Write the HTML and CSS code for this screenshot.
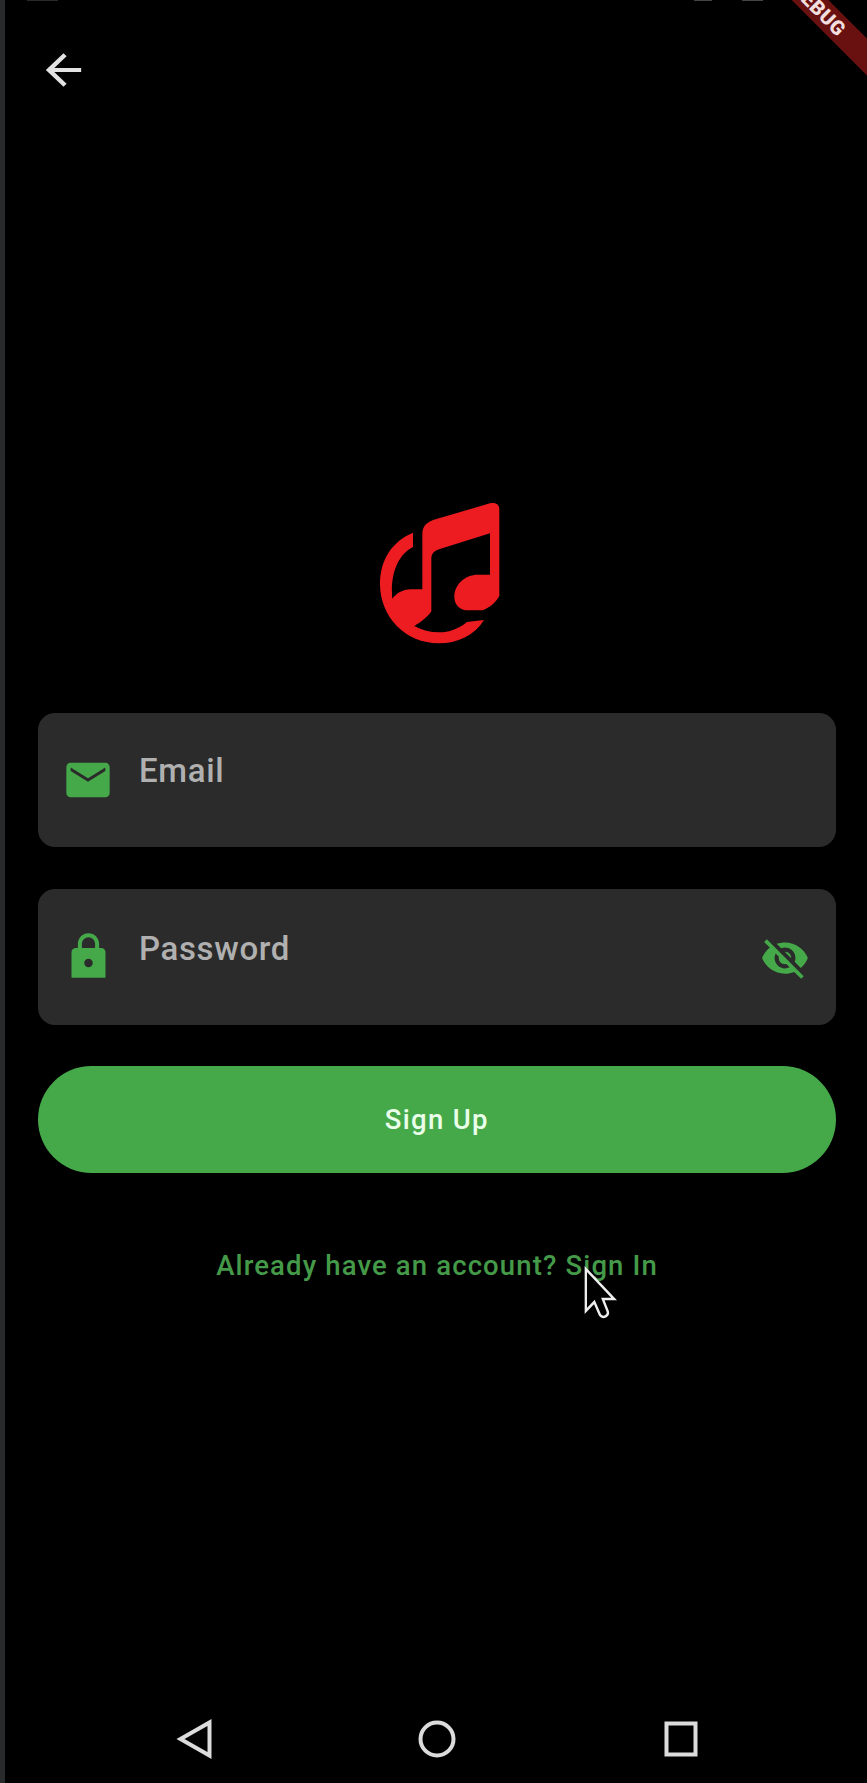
FILE: index.html
```
<!DOCTYPE html>
<html lang="en">
<head>
<meta charset="utf-8">
<title>Sign Up</title>
<link rel="stylesheet" href="styles.css">
</head>
<body>
<main class="screen">
  <div class="status-bar"><i class="sliver time"></i><i class="sliver wifi"></i><i class="sliver battery"></i></div>
  <div class="debug-banner">DEBUG</div>
  <header class="app-bar">
    <svg class="back" viewBox="0 0 24 24" preserveAspectRatio="none"><path d="M20 11H7.83l5.59-5.59L12 4l-8 8 8 8 1.41-1.41L7.83 13H20z"/></svg>
  </header>
  <svg class="logo" viewBox="0 0 480 510">
    <path d="M159 128C98 153 60 208 60 282C60 380 136 460 237 460C291 460 344 437 372 390L321 396C296 417 267 427 237 427C210 427 186 421 163 408C180 398 205 380 214 364V207C214 192 222 183 237 178L390 130V254H355C312 254 283 286 283 320C283 345 300 361 325 361H366C388 354 408 337 418 317V58C418 42 406 36 390 40L229 87C202 95 187 107 187 132V298H151C128 299 109 310 97 326C90 258 111 195 159 171Z"/>
  </svg>
  <form class="form">
    <label class="field email">
      <svg class="icon mail" viewBox="0 0 24 24"><path d="M20 4H4c-1.100 0-1.990.9-1.990 2L2 18c0 1.100.9 2 2 2h16c1.100 0 2-.9 2-2V6c0-1.100-.9-2-2-2zm0 3.800l-8 5-8-5V6.200l8 5 8-5v1.600z"/></svg>
      <span class="label label-email">Email</span>
    </label>
    <label class="field password">
      <svg class="icon lock" viewBox="0 0 24 24"><path d="M18 8h-1V6c0-2.760-2.240-5-5-5S7 3.240 7 6v2H6c-1.100 0-2 .9-2 2v12h16V10c0-1.100-.9-2-2-2zm-6 9c-1.100 0-2-.9-2-2s.9-2 2-2 2 .9 2 2-.9 2-2 2zm3.100-9H8.900V6c0-1.710 1.390-3.100 3.100-3.100s3.100 1.390 3.100 3.100v2z"/></svg>
      <span class="label label-password">Password</span>
      <svg class="icon eye" viewBox="0 0 24 24"><path d="M12 7c2.760 0 5 2.240 5 5 0 .65-.13 1.260-.36 1.830l2.920 2.920c1.510-1.260 2.700-2.890 3.430-4.750-1.730-4.390-6-7.500-11-7.500-1.400 0-2.740.25-3.980.7l2.160 2.160C10.740 7.130 11.350 7 12 7zM2 4.270l2.280 2.280.46.46C3.080 8.300 1.780 10.020 1 12c1.730 4.390 6 7.500 11 7.500 1.550 0 3.030-.3 4.380-.84l.42.42L19.730 22 21 20.730 3.270 3 2 4.270zM7.530 9.800l1.550 1.550c-.05.21-.08.43-.08.65 0 1.660 1.340 3 3 3 .22 0 .44-.03.65-.08l1.550 1.550c-.67.33-1.410.53-2.200.53-2.760 0-5-2.240-5-5 0-.79.2-1.530.53-2.200zm4.310-.78l3.150 3.150.02-.16c0-1.660-1.340-3-3-3l-.17.01z"/></svg>
    </label>
    <button class="submit" type="button"><span>Sign Up</span></button>
  </form>
  <p class="switch"><span>Already have an account? Sign In</span></p>
  <svg class="cursor" viewBox="0 0 36 54" preserveAspectRatio="none"><path d="M3 3V45L12 36L18 49C21 53 28 50 26 45L21 33H33Z"/></svg>
  <nav class="nav-bar">
    <svg class="nav nav-back" viewBox="0 0 40 42"><path d="M33.500 4.500V37.500L4.500 21Z"/></svg>
    <svg class="nav nav-home" viewBox="0 0 40 42"><circle cx="20" cy="21" r="16.500"/></svg>
    <svg class="nav nav-recent" viewBox="0 0 40 42"><path d="M5.500 5.500H34.500V36.500H5.500Z"/></svg>
  </nav>
</main>
</body>
</html>
```
FILE: styles.css
```
* { box-sizing: border-box; }
body { margin: 0; background: #000; font-family: Roboto, "Liberation Sans", sans-serif; }
.screen { position: relative; width: 867px; height: 1783px; overflow: hidden; background: #000; border-left: 5px solid #292a2c; display: flex; flex-direction: column; }
.status-bar { height: 1px; display: flex; }
.sliver { height: 1px; background: #444; }
.time { width: 31px; margin-left: 22px; background: #292929; }
.wifi { width: 18px; margin-left: 636px; }
.battery { width: 21px; margin-left: 30px; }
.debug-banner { position: absolute; left: 714px; top: -4px; width: 200px; height: 26px; line-height: 26px; text-align: center; background: #691111; color: #f3dede; font-size: 20px; font-weight: 900; letter-spacing: .5px; transform: rotate(45deg); }
.app-bar { height: 489px; padding: 44px 0 0 32px; }
.back { display: block; width: 53px; height: 50px; fill: #e2e2e2; }
.logo { display: block; width: 160px; height: 170px; margin-left: 355px; fill: #ed1c20; }
.form { margin: 53px 31px 0 32.500px; display: flex; flex-direction: column; }
.field { display: flex; align-items: flex-start; background: #2b2b2b; border-radius: 17px; }
.email { height: 134px; margin-bottom: 42px; }
.password { height: 136px; margin-bottom: 41px; }
.icon { display: block; fill: #45a849; flex: none; }
.mail { width: 52px; height: 52px; margin: 41px 0 0 24.500px; }
.lock { width: 51px; height: 51px; margin: 42px .5px 0 25px; }
.eye { width: 50px; height: 50px; margin: 43.500px 26.500px 0 auto; }
.label { color: #b0b0b0; font-size: 33px; line-height: 38px; font-weight: 500; white-space: nowrap; margin-left: 25px; letter-spacing: .65px; }
.label-email { margin-top: 39px; }
.label-password { margin-top: 41px; }
.submit { height: 107px; padding: 0; border: 0; border-radius: 54px; background: #45a849; color: #eaffea; font: 500 27.500px/32px Roboto, sans-serif; letter-spacing: 1.300px; }
.switch { margin: 77px 0 0; padding-left: 2px; text-align: center; font-size: 27.500px; line-height: 32px; font-weight: 500; letter-spacing: 1.130px; color: #459a49; width: 862px; white-space: nowrap; }
.cursor { position: absolute; left: 578px; top: 1266px; width: 34px; height: 54px; fill: #000; stroke: #eee; stroke-width: 2.500; stroke-linejoin: miter; }
.nav-bar { margin-top: auto; height: 65px; display: flex; align-items: flex-start; padding-left: 171px; }
.nav { width: 40px; height: 42px; fill: none; stroke: #dcdcdc; stroke-width: 4; }
.nav-home { margin-left: 201px; }
.nav-recent { margin-left: 203.500px; }
```
